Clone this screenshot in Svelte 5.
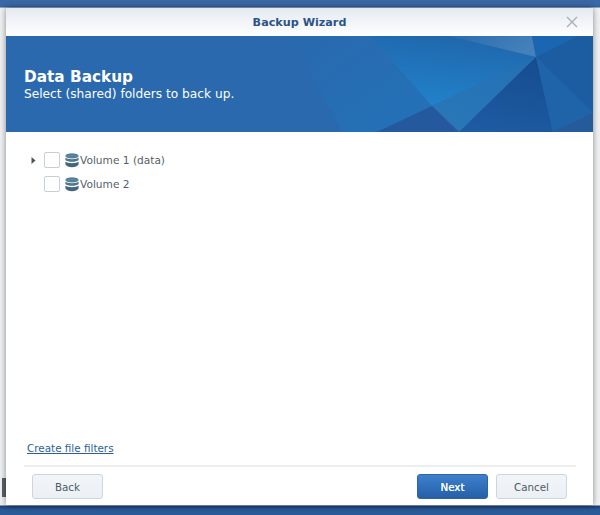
<script>
  const volumes = [
    { name: 'Volume 1 (data)', expandable: true },
    { name: 'Volume 2', expandable: false }
  ];
</script>

<div class="desktop">
  <span class="taskbar-edge"></span>
  <div class="window">
    <div class="titlebar">
      <span class="title">Backup Wizard</span>
      <svg class="close" width="12" height="12" viewBox="0 0 12 12">
        <path d="M1 1 L11 11 M11 1 L1 11" stroke="#a9b1b8" stroke-width="1.4" fill="none" />
      </svg>
    </div>

    <div class="banner">
      <svg class="facets" width="300" height="96" viewBox="0 0 300 96">
        <defs>
          <linearGradient id="glow" x1="0.7" y1="0" x2="0.45" y2="0.95">
            <stop offset="0" stop-color="#2066ab" />
            <stop offset="1" stop-color="#2180c8" />
          </linearGradient>
          <linearGradient id="side" x1="0" y1="0" x2="1" y2="1">
            <stop offset="0" stop-color="#2a69ae" />
            <stop offset="1" stop-color="#2272b8" />
          </linearGradient>
          <linearGradient id="lit" x1="0" y1="0" x2="1" y2="0.3">
            <stop offset="0" stop-color="#2b6cae" />
            <stop offset="1" stop-color="#4481ba" />
          </linearGradient>
          <linearGradient id="low" x1="1" y1="0" x2="0" y2="1">
            <stop offset="0" stop-color="#236fb3" />
            <stop offset="1" stop-color="#2a78b8" />
          </linearGradient>
          <linearGradient id="dark" x1="0.6" y1="0" x2="0.3" y2="1">
            <stop offset="0" stop-color="#164d90" />
            <stop offset="1" stop-color="#1d5ba2" />
          </linearGradient>
        </defs>
        <polygon points="7,17 49,96 0,96 0,17" fill="#2a69ae" />
        <polygon points="0,0 77,0 139,70 84,96 49,96 7,17 0,17" fill="url(#side)" />
        <polygon points="77,0 157,0 243,21 139,70" fill="url(#glow)" />
        <polygon points="157,0 239,0 243,21" fill="url(#lit)" />
        <polygon points="239,0 285,0 243,21" fill="#1a66b0" />
        <polygon points="285,0 300,0 300,77 243,21" fill="#1c5da2" />
        <polygon points="139,70 243,21 166,96" fill="url(#low)" />
        <polygon points="139,70 166,96 84,96" fill="#25599e" />
        <polygon points="243,21 166,96 260,96" fill="url(#dark)" />
        <polygon points="243,21 260,96 300,77" fill="#1f63a8" />
        <polygon points="300,77 260,96 300,96" fill="#265b9b" />
      </svg>
      <h1>Data Backup</h1>
      <p>Select (shared) folders to back up.</p>
    </div>

    <div class="content">
      <div class="tree">
        {#each volumes as vol}
          <div class="row">
            <span class="arrow">
              {#if vol.expandable}
                <svg width="5" height="7" viewBox="0 0 5 7"><path d="M0.5 0 L4.5 3.5 L0.5 7 Z" fill="#4a5560" /></svg>
              {/if}
            </span>
            <span class="check"></span>
            <svg class="db" width="14" height="15" viewBox="0 0 14 15">
              <ellipse cx="7" cy="2.9" rx="6.6" ry="2.6" fill="#5b8199" />
              <path d="M0.4 4.6 C2 6.9 12 6.9 13.6 4.6 V7 C12 9.4 2 9.4 0.4 7 Z" fill="#4f7690" />
              <path d="M0.4 8.6 C2 10.9 12 10.9 13.6 8.6 V11.6 C12 15 2 15 0.4 11.6 Z" fill="#44657e" />
            </svg>
            <span class="label">{vol.name}</span>
          </div>
        {/each}
      </div>

      <div class="bottom">
        <a class="filters" href="#filters">Create file filters</a>
        <div class="toolbar">
          <button class="btn">Back</button>
          <div class="right">
            <button class="btn primary">Next</button>
            <button class="btn">Cancel</button>
          </div>
        </div>
      </div>
    </div>
  </div>
</div>

<style>
  :global(body) {
    margin: 0;
    background: #f1f2f4;
  }

  .desktop {
    position: relative;
    width: 600px;
    height: 515px;
    overflow: hidden;
    box-sizing: border-box;
    padding: 8px 7px 10px 6px;
    background: linear-gradient(to bottom, #3a68a6 0, #3a68a6 6px, #2f5a94 7px, #eef0f2 8px, #eef0f2 505px, #1c3f70 506px, #2a5a98 510px, #2a5a98 515px);
    font-family: "DejaVu Sans", Verdana, sans-serif;
  }

  .taskbar-edge {
    position: absolute;
    left: 2px;
    top: 478px;
    width: 4px;
    height: 19px;
    background: #5b6068;
  }

  .window {
    position: relative;
    height: 497px;
    display: flex;
    flex-direction: column;
    background: #fff;
    box-shadow: 0 0 6px rgba(0, 0, 0, 0.45);
  }

  .titlebar {
    height: 28px;
    flex: none;
    position: relative;
    display: flex;
    align-items: center;
    justify-content: center;
    background: linear-gradient(to bottom, #e4e9f1, #ffffff);
  }

  .title {
    font-size: 11.2px;
    font-weight: bold;
    color: #2c5487;
  }

  .close {
    position: absolute;
    right: 15px;
    top: 8px;
  }

  .banner {
    height: 96px;
    flex: none;
    box-sizing: border-box;
    padding: 32px 18px 0;
    position: relative;
    overflow: hidden;
    background: #2a69ae;
    color: #fff;
  }

  .facets {
    position: absolute;
    right: 0;
    top: 0;
  }

  h1 {
    position: relative;
    margin: 0;
    font-size: 15.3px;
    line-height: 18px;
    font-weight: bold;
  }

  p {
    position: relative;
    margin: 0;
    font-size: 12.2px;
    line-height: 16px;
  }

  .content {
    flex: 1;
    display: flex;
    flex-direction: column;
    justify-content: space-between;
    padding: 20px 17px 6px 18px;
  }

  .tree {
    display: flex;
    flex-direction: column;
    gap: 8px;
  }

  .row {
    display: flex;
    align-items: center;
    height: 16px;
  }

  .arrow {
    width: 20px;
    padding-left: 7px;
    box-sizing: border-box;
    display: flex;
    align-items: center;
  }

  .check {
    width: 14px;
    height: 14px;
    border: 1px solid #c6ced6;
    border-radius: 2px;
    background: #fff;
    margin-right: 5px;
  }

  .db {
    margin-right: 1px;
  }

  .label {
    font-size: 10.6px;
    color: #555f69;
  }

  .filters {
    display: block;
    font-size: 10.4px;
    color: #2c5f9e;
    margin: 0 0 11px 3px;
  }

  .toolbar {
    border-top: 2px solid #eeeeee;
    padding: 7px 0 0 8px;
    display: flex;
    justify-content: space-between;
  }

  .right {
    display: flex;
    gap: 8px;
    margin-right: 9px;
  }

  .btn {
    width: 71px;
    height: 25px;
    padding: 0;
    font: 10.3px "DejaVu Sans", Verdana, sans-serif;
    color: #505a64;
    border: 1px solid #ccd6e0;
    border-radius: 3px;
    background: linear-gradient(to bottom, #f2f5f8, #ebf0f5);
  }

  .primary {
    color: #fff;
    text-shadow: 0 0 0.6px #fff;
    border-color: #2b65a8;
    background: linear-gradient(to bottom, #3d80cc, #2460a8);
  }
</style>
